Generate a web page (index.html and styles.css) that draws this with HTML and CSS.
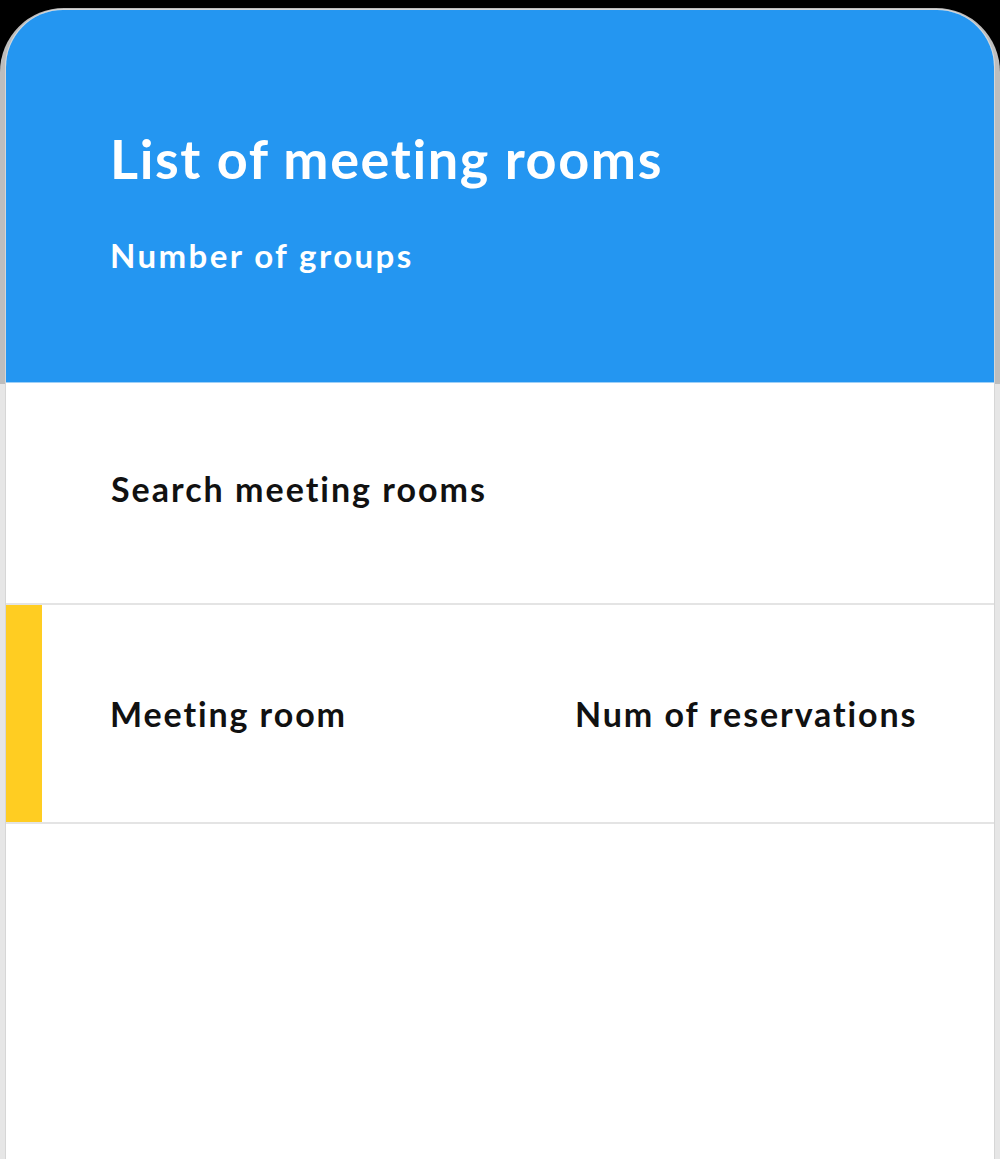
FILE: index.html
```html
<!DOCTYPE html>
<html lang="en">
<head>
<meta charset="utf-8">
<title>List of meeting rooms</title>
<link rel="stylesheet" href="styles.css">
</head>
<body>
  <div class="frame">
    <div class="card">
      <header class="header">
        <h1 class="title">List of meeting rooms</h1>
        <p class="subtitle">Number of groups</p>
      </header>
      <section class="search">
        <span class="search-label">Search meeting rooms</span>
      </section>
      <div class="table-head">
        <span class="marker"></span>
        <span class="col col-room">Meeting room</span>
        <span class="col col-count">Num of reservations</span>
      </div>
      <div class="table-body"></div>
    </div>
  </div>
</body>
</html>
```

FILE: styles.css
```css
html, body {
  margin: 0;
  padding: 0;
  height: 100%;
}

body {
  background: #000;
  font-family: Lato, "Open Sans", sans-serif;
}

.frame {
  margin-top: 8px;
  height: 1151px;
  box-sizing: border-box;
  padding: 1px 5px 0 5px;
  background: linear-gradient(#bdbdbd 0, #bdbdbd 376px, #e6e6e6 376px);
  border-radius: 64px 64px 0 0;
}

.card {
  height: 100%;
  box-sizing: border-box;
  background: #fff;
  border: 1px solid #d6d6d6;
  border-bottom: none;
  border-radius: 58px 58px 0 0;
  overflow: hidden;
  display: flex;
  flex-direction: column;
}

.header {
  background: #2496f1;
  height: 373px;
  box-sizing: border-box;
  padding: 117px 0 0 104px;
  color: #fff;
  border-bottom: 1px solid #9fd0f7;
}

.title {
  margin: 0;
  font-size: 54px;
  font-weight: 700;
  line-height: 64px;
  letter-spacing: 1.6px;
}

.subtitle {
  margin: 44px 0 0;
  font-size: 33px;
  font-weight: 700;
  line-height: 40px;
  letter-spacing: 2.4px;
}

.search {
  height: 222px;
  box-sizing: border-box;
  display: flex;
  align-items: center;
  padding: 0 0 10px 105px;
  border-bottom: 2px solid #e4e4e4;
}

.search-label,
.col {
  font-size: 34px;
  font-weight: 700;
  color: #111;
  letter-spacing: 1.9px;
}

.search-label {
  letter-spacing: 2px;
}

.table-head {
  height: 217px;
  display: flex;
  align-items: center;
  border-bottom: 2px solid #e4e4e4;
}

.marker {
  align-self: stretch;
  width: 36px;
  background: #ffcd22;
}

.col-room {
  margin-left: 68px;
  width: 465px;
}

.table-body {
  flex: 1;
  background: #fff;
}
```
